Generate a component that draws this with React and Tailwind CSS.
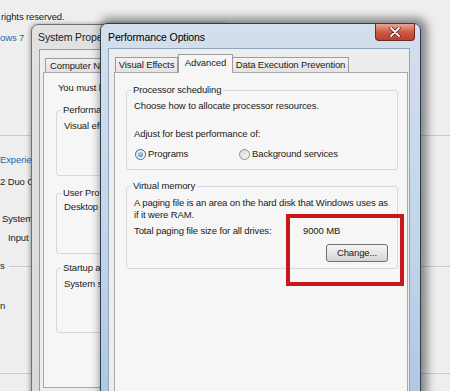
export default function App() {
  return (
    <div className="relative h-[391px] w-[450px] overflow-hidden bg-[#eeeeee] font-['Liberation_Sans',Arial,sans-serif] text-[9.5px] leading-[14px] tracking-[-0.12px] text-[#1a1a1a]">
      {/* Background: System control panel */}
      <div className="flex flex-col pt-[10px]">
        <div className="pl-[1px] whitespace-nowrap">rights reserved.</div>
        <div className="mt-[7px] whitespace-nowrap text-[#2a66b0]">ows 7</div>
        <div className="mt-[90px] h-px w-full bg-[#c9c9c9]" />
        <div className="mt-[17px] whitespace-nowrap text-[#2a66b0]">Experience Index</div>
        <div className="mt-[8px] whitespace-nowrap">2 Duo CPU E8400 @ 3.00GHz</div>
        <div className="mt-[23px] whitespace-nowrap pl-[2px]">System</div>
        <div className="mt-[5px] whitespace-nowrap pl-[8px]">Input is available for this Display</div>
        <div className="mt-[14px] flex items-center">
          <span>s</span>
          <div className="ml-[4px] h-px flex-1 bg-[#c9c9c9]" />
        </div>
        <div className="mt-[26px] whitespace-nowrap">n</div>
        <div className="mt-[60px] h-px w-full bg-[#c9c9c9]" />
      </div>

      {/* System Properties window */}
      <div className="absolute left-[31px] top-[24px] z-10 h-[420px] w-[200px] rounded-t-[7px] border border-[#707070] bg-gradient-to-b from-[#e2e2e2] to-[#d8d8d8] shadow-[-1px_0_4px_rgba(0,0,0,0.35)]">
        <div className="flex h-[24px] items-center whitespace-nowrap pl-[6px] text-[10.5px]">System Properties</div>
        <div className="ml-[7px] h-[400px] border border-[#9a9a9a] bg-[#ededed] pl-[3px] pt-[8px]">
          <div className="flex h-[14px] items-end pl-[2px]">
            <div className="flex h-[14px] w-[70px] items-center whitespace-nowrap border border-b-0 border-[#9c9c9c] bg-gradient-to-b from-[#f2f2f2] to-[#e2e2e2] pl-[4px]">Computer Name</div>
            <div className="flex h-[14px] w-[50px] items-center whitespace-nowrap border border-b-0 border-l-0 border-[#9c9c9c] bg-gradient-to-b from-[#f2f2f2] to-[#e2e2e2] pl-[4px]">Hardware</div>
          </div>
          <div className="h-[316px] border border-[#a8a8a8] bg-[#f6f6f6] pl-[12px] pt-[8px]">
            <div className="ml-[2px] whitespace-nowrap">You must be logged on as an Administrator to make most of these changes.</div>
            <fieldset className="mt-[8px] h-[73px] w-[200px] rounded-[3px] border border-[#d3d9de] pl-[7px]">
              <legend className="-ml-[3px] whitespace-nowrap px-[2px]">Performance</legend>
              <div className="mt-[2px] whitespace-nowrap">Visual effects, processor scheduling, memory usage, and virtual memory</div>
            </fieldset>
            <fieldset className="mt-[10px] h-[68px] w-[200px] rounded-[3px] border border-[#d3d9de] pl-[7px]">
              <legend className="-ml-[3px] whitespace-nowrap px-[2px]">User Profiles</legend>
              <div className="whitespace-nowrap">Desktop settings related to your logon</div>
            </fieldset>
            <fieldset className="mt-[7px] h-[72px] w-[200px] rounded-[3px] border border-[#d3d9de] pl-[7px]">
              <legend className="-ml-[3px] whitespace-nowrap px-[2px]">Startup and Recovery</legend>
              <div className="mt-[2px] whitespace-nowrap">System startup, system failure, and debugging information</div>
            </fieldset>
          </div>
        </div>
      </div>

      {/* Performance Options window */}
      <div className="absolute left-[100px] top-[23px] z-20 h-[420px] w-[321px] rounded-t-[7px] border border-[#2f3f52] bg-gradient-to-b from-[#d3dfec] via-[#c3d5e9] to-[#aac4e0] shadow-[3px_-2px_10px_3px_rgba(0,0,0,0.45)]">
        <div className="relative flex h-[24px] items-center whitespace-nowrap pl-[7px] pt-[1px] text-[10.5px] text-black">
          Performance Options
          <div className="absolute right-[5px] top-0 flex h-[17px] w-[40px] items-center justify-center rounded-b-[4px] border border-t-0 border-[#6b2a22] bg-gradient-to-b from-[#e7a597] via-[#cf5a44] to-[#b7402b]">
            <svg width="12" height="10" viewBox="0 0 12 10">
              <path d="M2 1 L10 9 M10 1 L2 9" stroke="#4a1a14" strokeWidth="3.2" strokeLinecap="round" />
              <path d="M2 1 L10 9 M10 1 L2 9" stroke="#ffffff" strokeWidth="1.8" strokeLinecap="round" />
            </svg>
          </div>
        </div>
        <div className="ml-[7px] mr-[10px] h-[380px] border border-[#8fa6be] bg-[#ededed] pl-[5px] pr-[1px] pt-[5px]">
          <div className="flex h-[18px] items-end pl-[1px]">
            <div className="flex h-[15px] w-[63px] items-center justify-center whitespace-nowrap border border-b-0 border-[#9c9c9c] bg-gradient-to-b from-[#f3f3f3] to-[#e3e3e3]">Visual Effects</div>
            <div className="relative z-10 -mb-px flex h-[19px] w-[55px] items-start justify-center whitespace-nowrap border border-b-0 border-[#9c9c9c] bg-[#f6f6f6] pt-[1px]">Advanced</div>
            <div className="flex h-[15px] w-[116px] items-center justify-center whitespace-nowrap border border-b-0 border-l-0 border-[#9c9c9c] bg-gradient-to-b from-[#f3f3f3] to-[#e3e3e3]">Data Execution Prevention</div>
          </div>
          <div className="h-[340px] border border-[#a8a8a8] bg-[#f6f6f6] pl-[11px] pr-[9px] pt-[10px]">
            <fieldset className="rounded-[3px] border border-[#d3d9de] pb-[8px] pl-[7px] pr-[9px]">
              <legend className="-ml-[3px] whitespace-nowrap px-[2px]">Processor scheduling</legend>
              <div className="mt-[2px] whitespace-nowrap">Choose how to allocate processor resources.</div>
              <div className="mt-[14px] whitespace-nowrap">Adjust for best performance of:</div>
              <div className="mt-[6px] flex items-center">
                <div className="ml-[1px] flex w-[104px] items-center gap-[2px]">
                  <span className="flex h-[11px] w-[11px] items-center justify-center rounded-full border border-[#3d6a93] bg-gradient-to-br from-[#dfe6ee] to-[#ffffff]">
                    <span className="h-[5px] w-[5px] rounded-full bg-[radial-gradient(circle_at_40%_35%,#b9e2ff,#1d6ec0)]" />
                  </span>
                  <span>Programs</span>
                </div>
                <div className="flex items-center gap-[2px]">
                  <span className="h-[11px] w-[11px] rounded-full border border-[#8e8e8e] bg-gradient-to-br from-[#d6d6d6] to-[#fbfbfb]" />
                  <span className="whitespace-nowrap">Background services</span>
                </div>
              </div>
            </fieldset>
            <fieldset className="mt-[9px] rounded-[3px] border border-[#d3d9de] pb-[6px] pl-[7px] pr-[9px]">
              <legend className="-ml-[3px] whitespace-nowrap px-[2px]">Virtual memory</legend>
              <div className="mt-[4px] leading-[12px]">
                <div className="whitespace-nowrap">A paging file is an area on the hard disk that Windows uses as</div>
                <div className="whitespace-nowrap">if it were RAM.</div>
              </div>
              <div className="mt-[3px] flex">
                <div className="w-[169px] shrink-0 whitespace-nowrap">Total paging file size for all drives:</div>
                <div className="whitespace-nowrap">9000 MB</div>
              </div>
              <div className="mt-[6px] flex justify-end">
                <div className="flex h-[18px] w-[62px] items-center justify-center rounded-[3px] border border-[#707070] bg-gradient-to-b from-[#f4f4f4] via-[#e6e6e6] to-[#d4d4d4]">Change...</div>
              </div>
            </fieldset>
          </div>
        </div>
      </div>

      {/* Red annotation rectangle */}
      <div className="absolute left-[286px] top-[214px] z-30 h-[72px] w-[118px] border-4 border-[#c8161d]" />
    </div>
  );
}
